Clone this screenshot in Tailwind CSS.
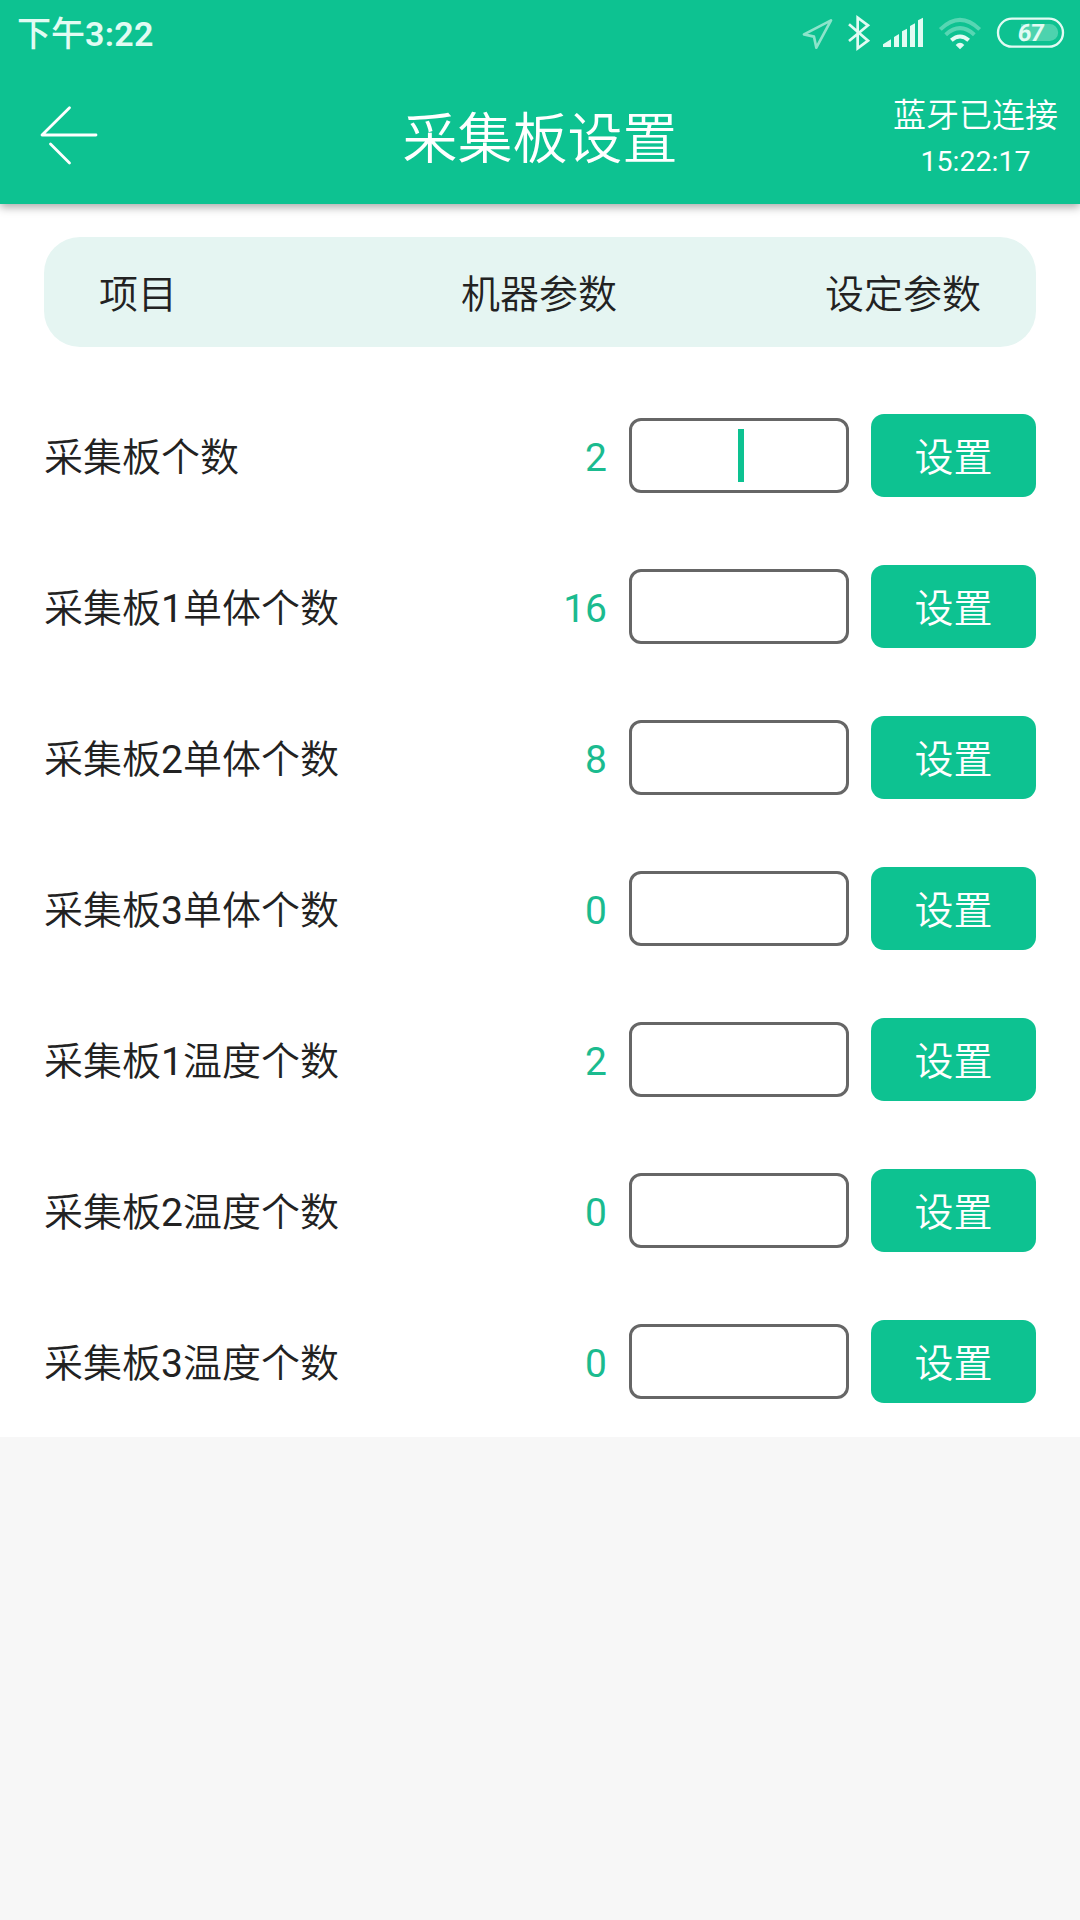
<!DOCTYPE html>
<html lang="zh-CN">
<head>
  <meta charset="UTF-8" />
  <meta name="viewport" content="width=device-width, initial-scale=1.0" />
  <title>采集板设置</title>
  <script src="https://cdn.jsdelivr.net/npm/@tailwindcss/browser@4"></script>
</head>
<body class="bg-[#f7f7f7] min-h-screen font-[Roboto,'Noto_Sans_CJK_SC',sans-serif] text-[39px] leading-[46px] text-[#222]">

  <header class="relative h-[204px] bg-[#0dc291] text-white shadow-[0_3px_9px_rgba(0,0,0,0.35)]">
    <!-- Status bar -->
    <div class="h-[68px] pl-[17px] pr-[14px] flex items-center justify-between text-[#e2fbf3]">
      <span class="text-[34px] font-medium">下午<span class="font-semibold tracking-[0.3px]">3:22</span></span>
      <div class="flex items-center">
        <svg class="w-[35px] h-[40px]" viewBox="60 42 105 120" fill="none" stroke="currentColor" stroke-width="8" stroke-linejoin="round" opacity="0.6">
          <path d="M153 61L72 103L102 110L109 143Z" />
        </svg>
        <svg class="w-[27px] h-[40px] ml-[10px]" viewBox="195 42 81 120" fill="none" stroke="currentColor" stroke-width="8">
          <path d="M207 73L264 122L233 145V53L264 76L207 123" />
        </svg>
        <svg class="w-[44px] h-[40px] ml-[9px]" viewBox="303 42 132 120" fill="currentColor">
          <path d="M309 133L333 118V141H309ZM342 111L357 102V141H342ZM366 94L381 86V141H366ZM390 78L405 70V141H390ZM414 61L429 53V141H414Z" />
        </svg>
        <svg class="w-[46px] h-[40px] ml-[12px]" viewBox="471 42 138 120" fill="none" stroke="currentColor" stroke-width="12">
          <path d="M481 88Q540 31 599 88" opacity="0.35" />
          <path d="M497 104Q540 65 583 104" opacity="0.35" />
          <path d="M514 121Q540 98 566 121" />
          <path d="M527 135Q540 122 553 135L540 148Z" fill="currentColor" stroke="none" />
        </svg>
        <svg class="w-[71px] h-[40px] ml-[12px]" viewBox="645 42 213 120">
          <rect x="654" y="56" width="195" height="84" rx="42" fill="none" stroke="currentColor" stroke-width="7" />
          <path d="M723 72H809A25 25 0 0 1 809 123H723Z" fill="currentColor" opacity="0.3" />
          <text transform="translate(749 123) skewX(-6)" text-anchor="middle" font-size="72" font-weight="700" letter-spacing="-3" fill="currentColor">67</text>
        </svg>
      </div>
    </div>

    <!-- Title bar -->
    <div class="h-[136px] flex items-center">
      <div class="w-[208px] pl-[39px]">
        <svg class="w-[62px] h-[62px]" viewBox="0 0 62 62" fill="none" stroke="currentColor" stroke-width="2.8" stroke-linecap="round" stroke-linejoin="round">
          <path d="M57 30H3L30.500 2.700M11.500 39L30.500 58" />
        </svg>
      </div>
      <h1 class="flex-1 pt-[5px] text-center text-[55px] leading-[64px] font-[350]">采集板设置</h1>
      <div class="w-[208px] pt-[6px] pr-[1px] text-center">
        <p class="text-[33px] font-[350]">蓝牙已连接</p>
        <p class="text-[28.5px]">15:22:17</p>
      </div>
    </div>
  </header>

  <main class="h-[1233px] px-[44px] pt-[33px] bg-white font-[350]">
    <div class="h-[110px] mb-[33px] px-[55px] pt-[5px] grid grid-cols-3 items-center rounded-[36px] bg-[#e5f5f2]">
      <span>项目</span>
      <span class="text-center pr-[2px]">机器参数</span>
      <span class="text-right">设定参数</span>
    </div>

    <div class="h-[151px] flex items-center gap-[22px]">
      <span class="flex-1 pt-[5px]">采集板个数</span>
      <span class="pt-[5px] font-normal text-[#1bbb8f]">2</span>
      <div class="w-[220px] h-[75px] flex items-center justify-center border-3 border-[#666] rounded-[12px]">
        <span class="w-[6px] h-[53px] ml-[4px] bg-[#0dc291]"></span>
      </div>
      <button class="w-[165px] h-[83px] pt-[5px] rounded-[13px] bg-[#0dc291] text-white">设置</button>
    </div>

    <div class="h-[151px] flex items-center gap-[22px]">
      <span class="flex-1 pt-[5px]">采集板<span class="font-normal">1</span>单体个数</span>
      <span class="pt-[5px] font-normal text-[#1bbb8f]">16</span>
      <input type="text" class="w-[220px] h-[75px] text-center border-3 border-[#666] rounded-[12px]" />
      <button class="w-[165px] h-[83px] pt-[5px] rounded-[13px] bg-[#0dc291] text-white">设置</button>
    </div>

    <div class="h-[151px] flex items-center gap-[22px]">
      <span class="flex-1 pt-[5px]">采集板<span class="font-normal">2</span>单体个数</span>
      <span class="pt-[5px] font-normal text-[#1bbb8f]">8</span>
      <input type="text" class="w-[220px] h-[75px] text-center border-3 border-[#666] rounded-[12px]" />
      <button class="w-[165px] h-[83px] pt-[5px] rounded-[13px] bg-[#0dc291] text-white">设置</button>
    </div>

    <div class="h-[151px] flex items-center gap-[22px]">
      <span class="flex-1 pt-[5px]">采集板<span class="font-normal">3</span>单体个数</span>
      <span class="pt-[5px] font-normal text-[#1bbb8f]">0</span>
      <input type="text" class="w-[220px] h-[75px] text-center border-3 border-[#666] rounded-[12px]" />
      <button class="w-[165px] h-[83px] pt-[5px] rounded-[13px] bg-[#0dc291] text-white">设置</button>
    </div>

    <div class="h-[151px] flex items-center gap-[22px]">
      <span class="flex-1 pt-[5px]">采集板<span class="font-normal">1</span>温度个数</span>
      <span class="pt-[5px] font-normal text-[#1bbb8f]">2</span>
      <input type="text" class="w-[220px] h-[75px] text-center border-3 border-[#666] rounded-[12px]" />
      <button class="w-[165px] h-[83px] pt-[5px] rounded-[13px] bg-[#0dc291] text-white">设置</button>
    </div>

    <div class="h-[151px] flex items-center gap-[22px]">
      <span class="flex-1 pt-[5px]">采集板<span class="font-normal">2</span>温度个数</span>
      <span class="pt-[5px] font-normal text-[#1bbb8f]">0</span>
      <input type="text" class="w-[220px] h-[75px] text-center border-3 border-[#666] rounded-[12px]" />
      <button class="w-[165px] h-[83px] pt-[5px] rounded-[13px] bg-[#0dc291] text-white">设置</button>
    </div>

    <div class="h-[151px] flex items-center gap-[22px]">
      <span class="flex-1 pt-[5px]">采集板<span class="font-normal">3</span>温度个数</span>
      <span class="pt-[5px] font-normal text-[#1bbb8f]">0</span>
      <input type="text" class="w-[220px] h-[75px] text-center border-3 border-[#666] rounded-[12px]" />
      <button class="w-[165px] h-[83px] pt-[5px] rounded-[13px] bg-[#0dc291] text-white">设置</button>
    </div>
  </main>

</body>
</html>
